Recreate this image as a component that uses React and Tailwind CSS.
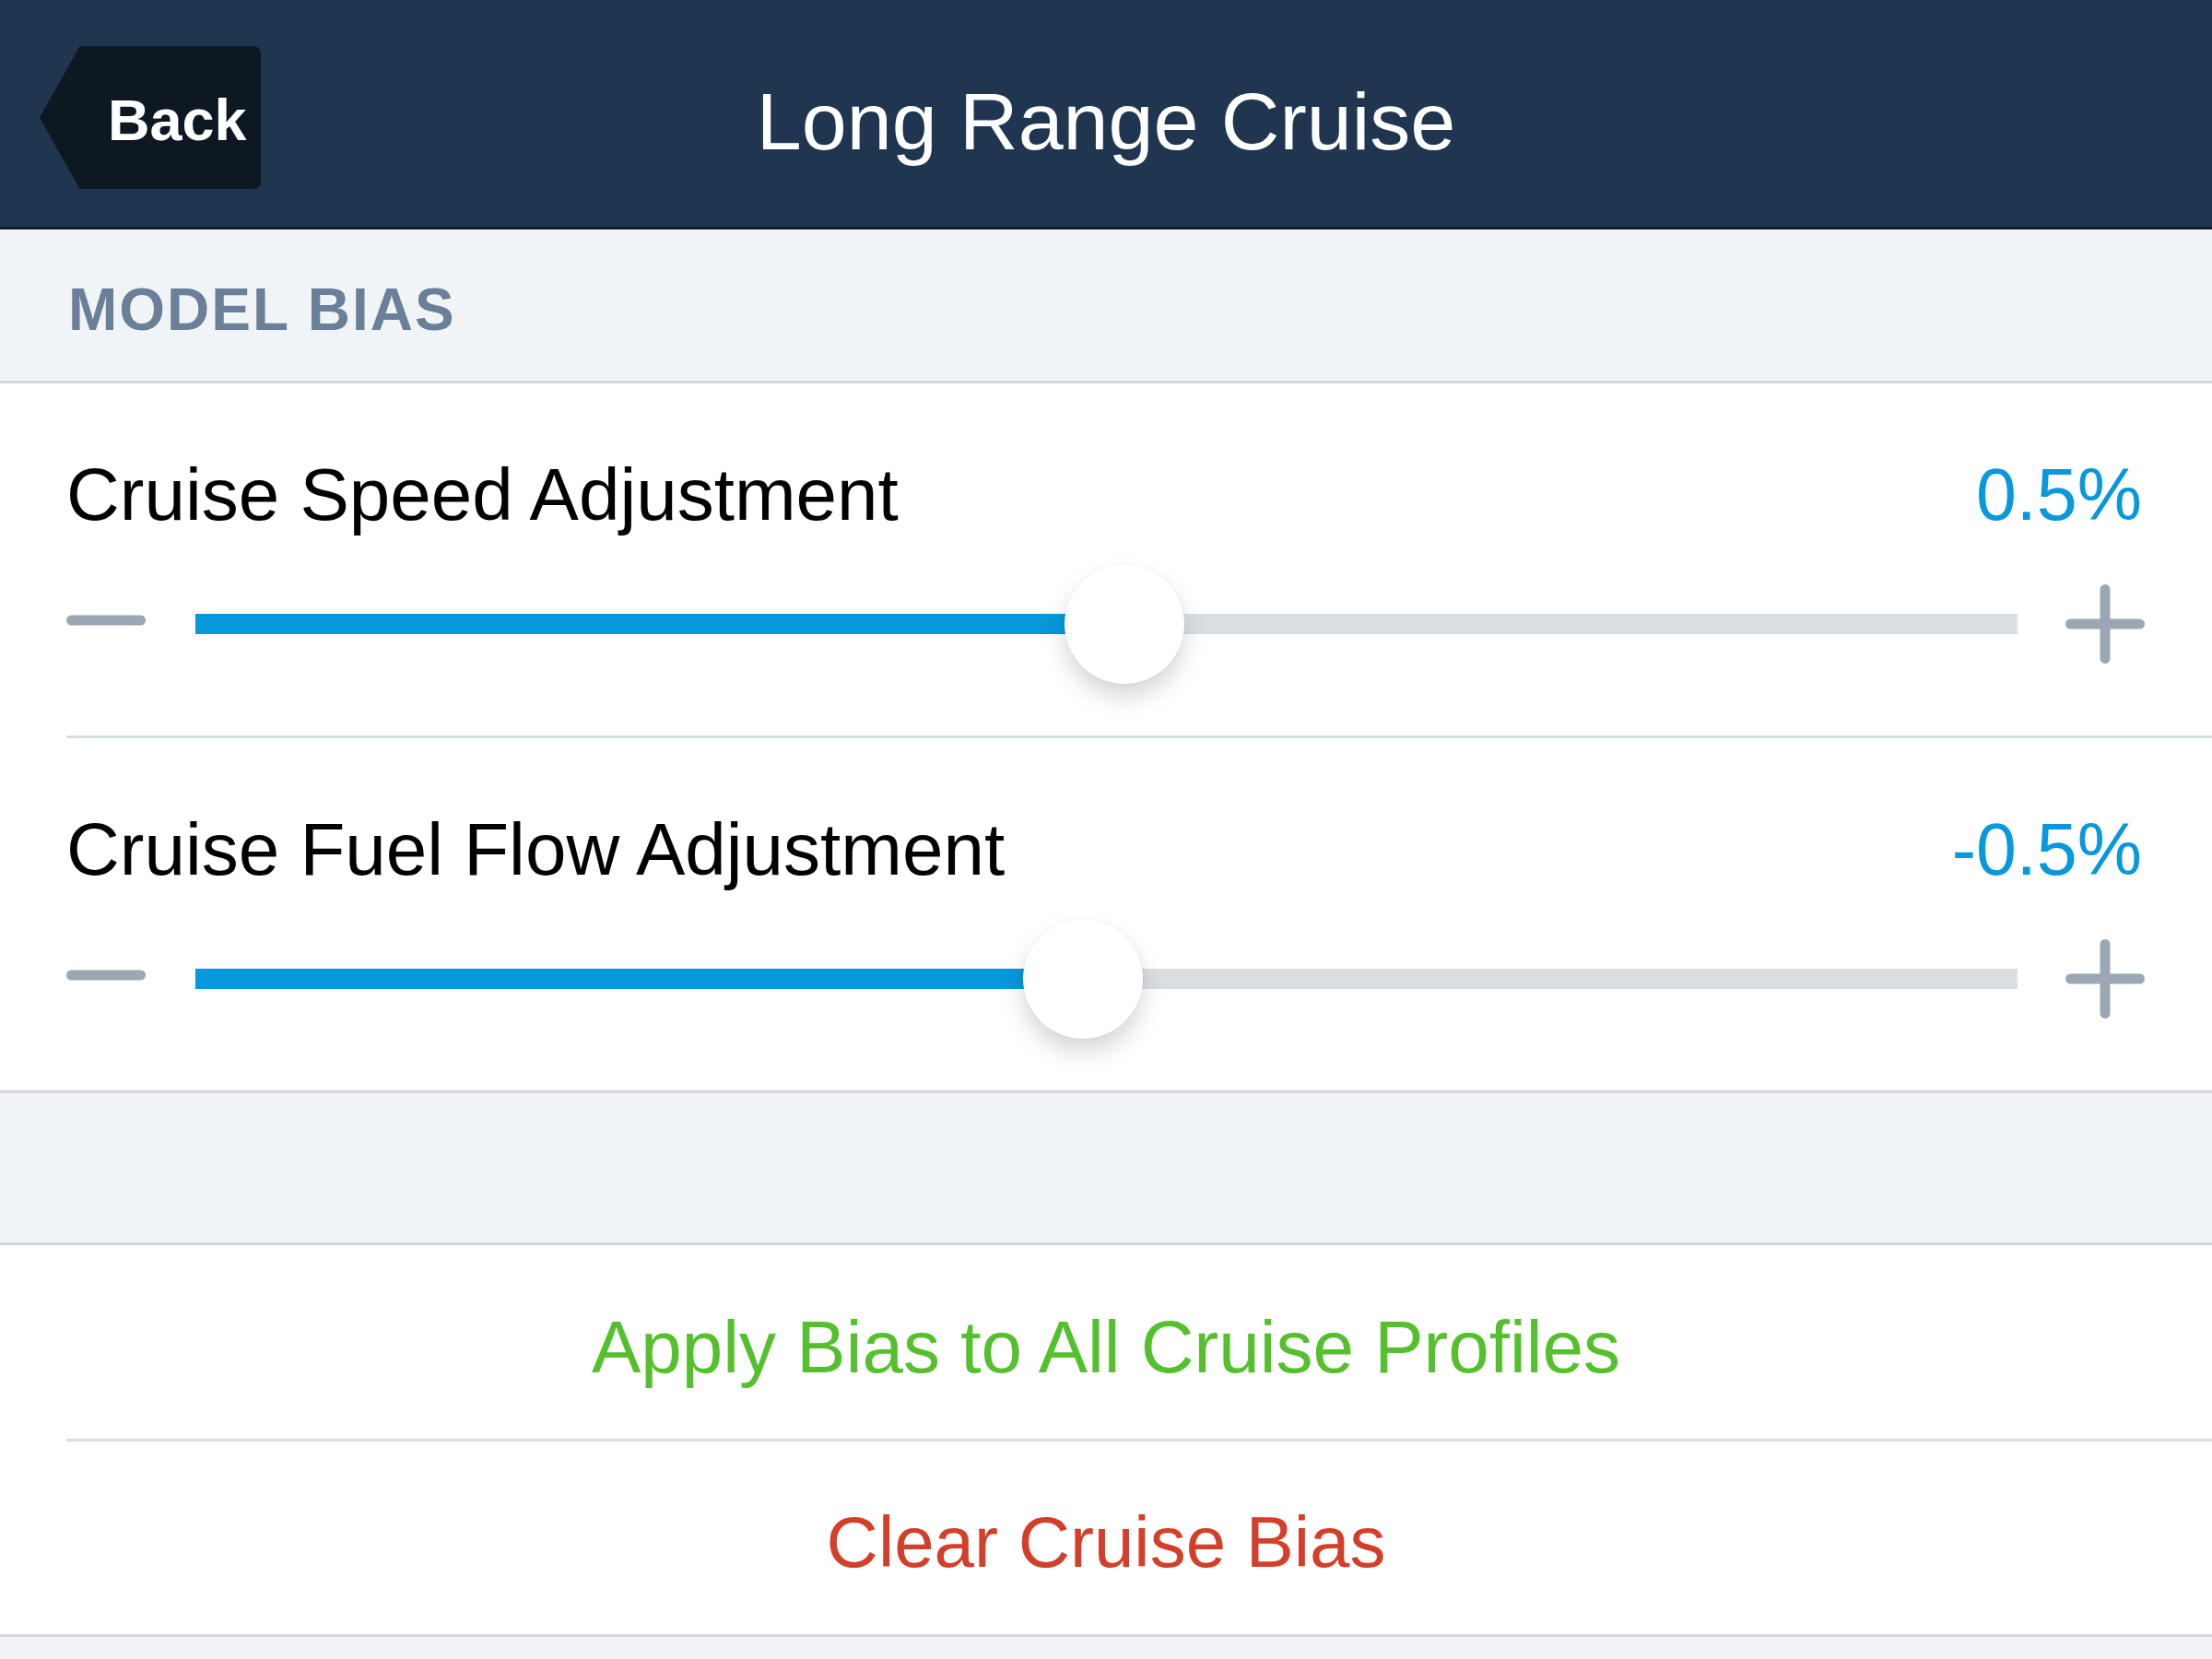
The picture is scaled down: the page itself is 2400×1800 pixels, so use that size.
import React from 'react';

const font = { fontFamily: '"Liberation Sans", Arial, sans-serif' };

const Minus = () => (
  <svg width="86" height="86" viewBox="0 0 86 86" className="shrink-0">
    <line x1="5.5" y1="39" x2="80.5" y2="39" stroke="#9ba7b4" strokeWidth="11" strokeLinecap="round" />
  </svg>
);

const Plus = () => (
  <svg width="86" height="86" viewBox="0 0 86 86" className="shrink-0">
    <line x1="5.5" y1="43" x2="80.5" y2="43" stroke="#9ba7b4" strokeWidth="11" strokeLinecap="round" />
    <line x1="43" y1="5.5" x2="43" y2="80.5" stroke="#9ba7b4" strokeWidth="11" strokeLinecap="round" />
  </svg>
);

const BiasSlider = ({ label, value, position }) => (
  <div className="pt-[81px] pb-[56px]">
    <div className="flex items-start justify-between pl-[72px] pr-[76px] h-[80px]">
      <span className="text-[80px] leading-none text-black">{label}</span>
      <span className="text-[79px] leading-none text-[#0898dc]">{value}</span>
    </div>
    <div className="mt-[35px] h-[130px] flex items-center pl-[72px] pr-[73px]">
      <Minus />
      <div className="relative flex-1 h-[22px] bg-[#d9dee3] ml-[54px] mr-[52px]">
        {/* filled part ends under the thumb */}
        <div className="absolute left-0 top-0 h-full bg-[#0898dc]" style={{ width: `${position}%` }} />
        <div
          className="absolute top-1/2 w-[130px] h-[130px] -translate-x-1/2 -translate-y-1/2 rounded-full bg-white shadow-[0_14px_26px_rgba(0,0,0,0.16),0_0_0_1px_rgba(0,0,0,0.03)]"
          style={{ left: `${position}%` }}
        />
      </div>
      <Plus />
    </div>
  </div>
);

export default function App() {
  return (
    <div className="w-[2400px] h-[1800px] bg-[#f0f4f7] overflow-hidden" style={font}>
      {/* nav bar */}
      <div className="h-[249px] bg-[#1f3550] border-b-[3px] border-[#0f1b28] grid grid-cols-[1fr_auto_1fr] items-start">
        <div className="pl-[43px] pt-[50px]">
          <button className="flex h-[155px] items-stretch">
            <svg width="43" height="155" viewBox="0 0 43 155" className="block">
              <polygon points="0,77.5 43.5,0 43.5,155" fill="#0e1823" />
            </svg>
            <div className="w-[197px] bg-[#0e1823] rounded-r-[8px] flex items-center pl-[31px] pt-[6px]">
              <span className="text-[63px] leading-none font-bold text-white">Back</span>
            </div>
          </button>
        </div>
        <h1 className="pt-[88px] text-[88px] leading-none text-white font-normal">Long Range Cruise</h1>
        <div />
      </div>

      {/* section header */}
      <div className="pt-[55px] pb-[45px] pl-[74px] border-b-[3px] border-[#cfd8e0]">
        <span className="text-[64px] leading-none font-bold tracking-[2px] text-[#6a8098]">MODEL BIAS</span>
      </div>

      <div className="bg-white border-b-[3px] border-[#cfd8e0]">
        <BiasSlider label="Cruise Speed Adjustment" value="0.5%" position={51} />
        <div className="ml-[72px] h-[3px] bg-[#d5dde4]" />
        <BiasSlider label="Cruise Fuel Flow Adjustment" value="-0.5%" position={48.7} />
      </div>

      <div className="h-[162px]" />

      <div className="bg-white border-y-[3px] border-[#cfd8e0]">
        <div className="pt-[71px] pb-[61px] text-center h-[210px]">
          <span className="text-[80px] leading-none text-[#55c02d]">Apply Bias to All Cruise Profiles</span>
        </div>
        <div className="ml-[72px] h-[3px] bg-[#d5dde4]" />
        <div className="pt-[70px] pb-[61px] text-center h-[209px]">
          <span className="text-[78px] leading-none text-[#d2402b]">Clear Cruise Bias</span>
        </div>
      </div>
    </div>
  );
}
